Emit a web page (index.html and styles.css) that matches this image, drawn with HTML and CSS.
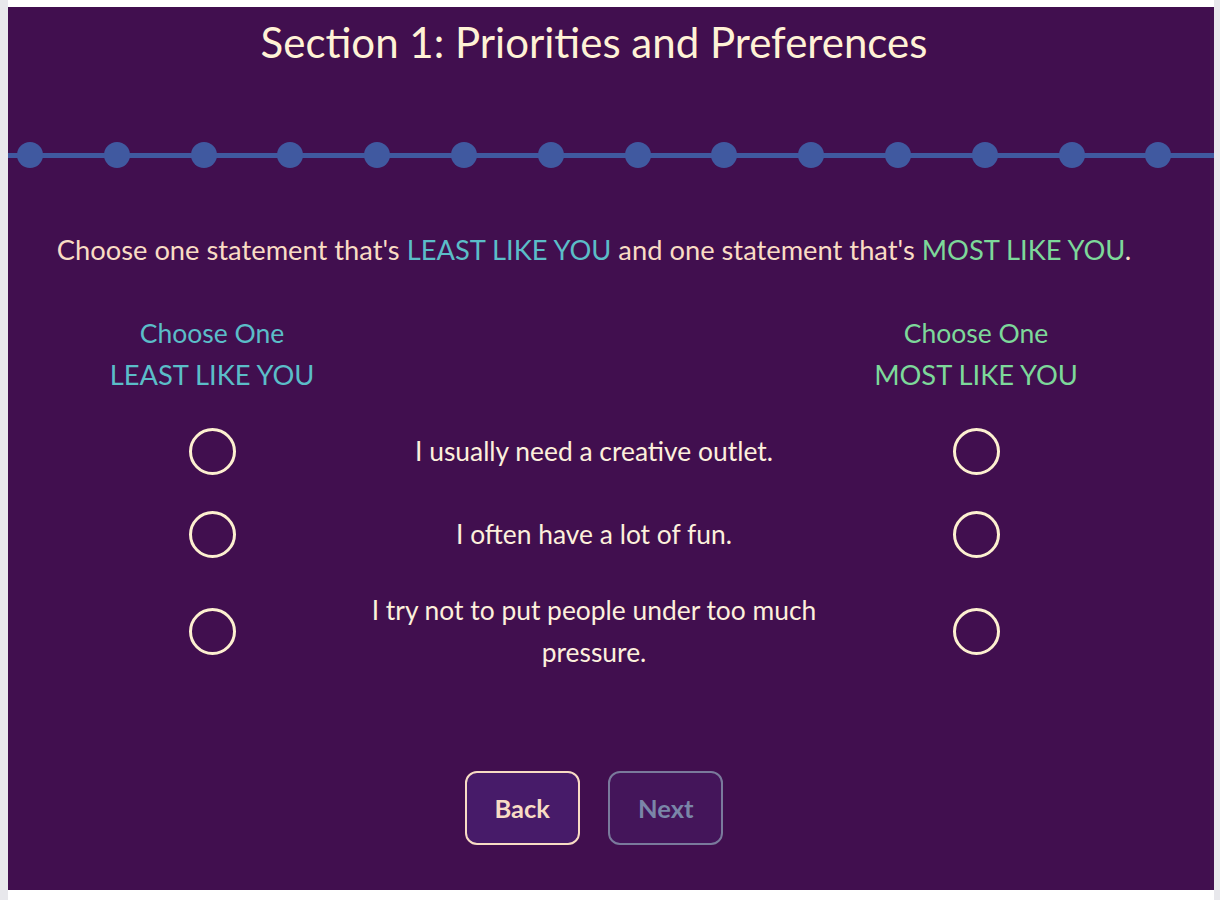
FILE: index.html
```html
<!DOCTYPE html>
<html lang="en">
<head>
<meta charset="utf-8">
<title>Section 1: Priorities and Preferences</title>
<link rel="stylesheet" href="styles.css">
</head>
<body>
<main class="panel">
  <div class="content">
    <h1 class="title">Section 1: Priorities and Preferences</h1>
  </div>
  <div class="progress">
    <span class="dot"></span><span class="dot"></span><span class="dot"></span><span class="dot"></span><span class="dot"></span><span class="dot"></span><span class="dot"></span><span class="dot"></span><span class="dot"></span><span class="dot"></span><span class="dot"></span><span class="dot"></span><span class="dot"></span><span class="dot"></span>
  </div>
  <div class="content">
    <p class="instruction">Choose one statement that's <span class="least">LEAST LIKE YOU</span> and one statement that's <span class="most">MOST LIKE YOU</span>.</p>
    <div class="grid">
      <div class="head least"><div>Choose One</div><div>LEAST LIKE YOU</div></div>
      <div></div>
      <div class="head most"><div>Choose One</div><div>MOST LIKE YOU</div></div>

      <div class="cell"><span class="radio"></span></div>
      <div class="cell statement">I usually need a creative outlet.</div>
      <div class="cell"><span class="radio"></span></div>

      <div class="cell"><span class="radio"></span></div>
      <div class="cell statement">I often have a lot of fun.</div>
      <div class="cell"><span class="radio"></span></div>

      <div class="cell"><span class="radio"></span></div>
      <div class="cell statement">I try not to put people under too much pressure.</div>
      <div class="cell"><span class="radio"></span></div>
    </div>
    <div class="buttons">
      <button class="btn back">Back</button>
      <button class="btn next">Next</button>
    </div>
  </div>
</main>
</body>
</html>
```
FILE: styles.css
```css
html {
  background: #e8e8ec;
}
body {
  margin: 0 6px 0 8px;
  padding: 7px 0 10px;
  background: #ffffff;
  font-family: Lato, "Open Sans", sans-serif;
}
.panel {
  background: #410f4f;
  height: 883px;
  box-sizing: border-box;
  padding: 12px 0 0;
}
.content {
  padding-right: 34px;
}
.title {
  margin: 0;
  text-align: center;
  color: #fff2d6;
  font-size: 42px;
  font-weight: 400;
  line-height: 46px;
}
.progress {
  margin-top: 77px;
  height: 26px;
  display: flex;
  align-items: center;
  gap: 60.8px;
  padding-left: 9px;
  background: linear-gradient(#4059a0, #4059a0) center / 100% 5px no-repeat;
}
.dot {
  width: 26px;
  height: 26px;
  border-radius: 50%;
  background: #4059a0;
  flex: none;
}
.instruction {
  margin: 64px 0 0;
  text-align: center;
  color: #f9dcc4;
  font-size: 27.3px;
  line-height: 36px;
}
.least { color: #5bbdc8; }
.most { color: #7dd89a; }
.grid {
  margin-top: 44px;
  display: grid;
  grid-template-columns: 306px 458px 306px;
  justify-content: center;
  row-gap: 27px;
}
.head {
  text-align: center;
  font-size: 26.5px;
  line-height: 42px;
}
.head div:last-child {
  font-size: 27.3px;
}
.cell {
  min-height: 56px;
  display: flex;
  align-items: center;
  justify-content: center;
}
.statement {
  text-align: center;
  color: #fdf0dc;
  font-size: 26.4px;
  line-height: 42px;
}
.radio {
  width: 41px;
  height: 41px;
  border: 3px solid #fdf0d0;
  border-radius: 50%;
}
.buttons {
  margin-top: 98px;
  display: flex;
  justify-content: center;
  gap: 28px;
}
.btn {
  box-sizing: border-box;
  height: 74px;
  padding: 0 28px;
  border-radius: 12px;
  font-family: inherit;
  font-size: 25.5px;
  font-weight: 700;
}
.back {
  background: #471b69;
  border: 2px solid #f8dcc4;
  color: #f8dcc4;
}
.next {
  background: #44155a;
  border: 2px solid #7a7a9c;
  color: #7a86a8;
}
```
